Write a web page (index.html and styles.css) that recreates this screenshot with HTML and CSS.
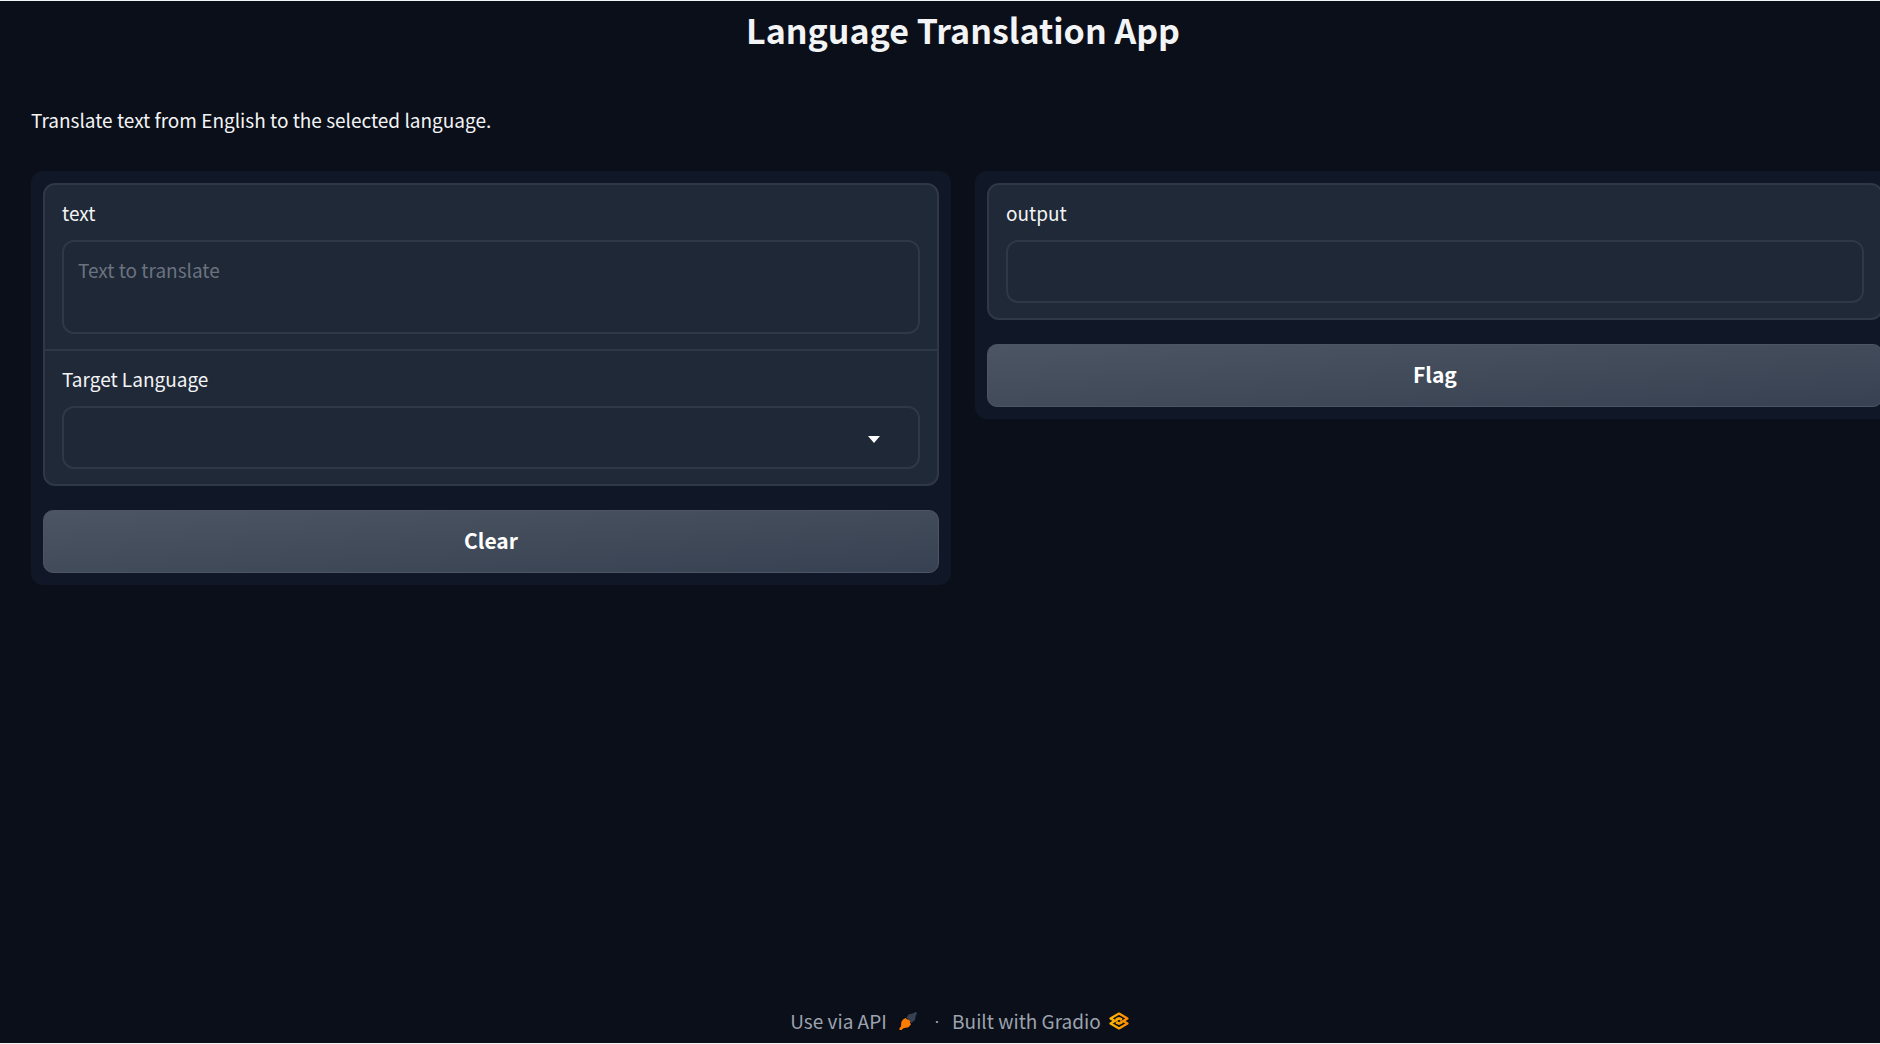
FILE: index.html
```html
<!DOCTYPE html>
<html lang="en">
<head>
<meta charset="utf-8">
<meta name="viewport" content="width=device-width, initial-scale=1">
<title>Language Translation App</title>
<link rel="stylesheet" href="styles.css">
</head>
<body>
<div class="app">
  <main class="content">
    <h1 class="title">Language Translation App</h1>
    <p class="description">Translate text from English to the selected language.</p>
    <div class="columns">
      <section class="panel">
        <div class="form">
          <div class="field">
            <label class="label" for="text">text</label>
            <textarea class="control control-tall" id="text" placeholder="Text to translate"></textarea>
          </div>
          <div class="field">
            <label class="label" for="language">Target Language</label>
            <div class="select-wrap">
              <select class="control" id="language"><option></option></select>
              <svg class="caret" viewBox="0 0 12 7" aria-hidden="true"><path d="M0 0h12L6 7z"/></svg>
            </div>
          </div>
        </div>
        <button class="button" type="button">Clear</button>
      </section>
      <section class="panel">
        <div class="form">
          <div class="field">
            <label class="label" for="output">output</label>
            <input class="control" id="output" type="text" readonly>
          </div>
        </div>
        <button class="button" type="button">Flag</button>
      </section>
    </div>
  </main>
  <footer class="footer">
    <a class="footer-link api" href="#api">Use via API
      <svg class="icon" viewBox="0 0 18 18" aria-hidden="true">
        <path fill="#374151" d="M7.500 5.500L9.500 2.500l4-1L17 0l1 1-1.300 3-.700 4-3.500 3z"/>
        <path fill="#ff7c00" d="M6.500 6l1.800 1.500L10 8l1.300 1.500-.300 1.300 1 1.500-2.500 3-4 .700-1.500.500-1.500 1.500-2 0 0-2L2 14.500 2.300 10 4 7.500z"/>
      </svg>
    </a>
    <span class="dot">·</span>
    <a class="footer-link" href="#gradio">Built with Gradio
      <svg class="icon logo" viewBox="0 0 20 18" aria-hidden="true">
        <defs><linearGradient id="amber" x1="0" y1="0" x2="1" y2="0"><stop offset="0" stop-color="#ffb800"/><stop offset="1" stop-color="#ff8a00"/></linearGradient></defs>
        <g fill="none" stroke="url(#amber)" stroke-width="2.200" stroke-linejoin="round">
          <path d="M5.500 8.800L1.500 6.500 10 1.500l8.500 5L10 11.500 7.500 10M7 7.700q3-2.400 6 0"/>
          <path d="M14.500 9.200l4 2.300L10 16.500l-8.500-5L10 6.500l2.500 1.500M13 10.300q-3 2.400-6 0"/>
        </g>
      </svg>
    </a>
  </footer>
</div>
</body>
</html>
```
FILE: styles.css
```css
* {
  box-sizing: border-box;
}

body {
  margin: 0;
  overflow: hidden;
  background: #0b0f19;
  color: #f3f4f6;
  font-family: "Noto Sans CJK SC", "Open Sans", sans-serif;
  font-size: 19px;
  line-height: 28px;
}

.app {
  display: flex;
  flex-direction: column;
  min-height: 100vh;
  margin-right: -15px;
  padding-left: 31px;
  border-top: 1px solid #f3f4f6;
  border-bottom: 1px solid #f3f4f6;
}

.content {
  flex: 1;
}

.title {
  margin: 5px 0 52px;
  font-size: 34px;
  line-height: 48px;
  text-align: center;
}

.description {
  margin: 0 0 37px;
}

.columns {
  display: grid;
  grid-template-columns: 1fr 1fr;
  align-items: start;
  gap: 24px;
}

.panel {
  display: flex;
  flex-direction: column;
  gap: 24px;
  padding: 12px;
  border-radius: 12px;
  background: #101726;
}

.form {
  border: 2px solid #2e3846;
  border-radius: 12px;
  background: #202937;
}

.field {
  padding: 14px 17px 15px;
}

.field + .field {
  border-top: 2px solid #2e3846;
}

.label {
  display: block;
  margin-bottom: 13px;
}

.control {
  display: block;
  width: 100%;
  height: 63px;
  padding: 14px;
  border: 2px solid #2e3846;
  border-radius: 12px;
  outline: 0;
  appearance: none;
  resize: none;
  background: #1f2836;
  color: inherit;
  font: inherit;
}

.control-tall {
  height: 94px;
}

.control::placeholder {
  color: #6b7280;
}

.select-wrap {
  position: relative;
}

.caret {
  position: absolute;
  top: 30px;
  right: 40px;
  width: 12px;
  height: 7px;
  fill: #fff;
  pointer-events: none;
}

.button {
  height: 63px;
  padding: 0 0 4px;
  border: 1px solid #4b5563;
  border-radius: 10px;
  background: linear-gradient(to bottom right, #4b5563, #374151);
  color: #fff;
  font: inherit;
  font-size: 21px;
  font-weight: 700;
}

.footer {
  display: flex;
  justify-content: center;
  padding: 0 7px 8px 0;
}

.footer-link {
  display: flex;
  align-items: center;
  gap: 8px;
  color: #9ca3af;
  text-decoration: none;
}

.api {
  gap: 12px;
}

.dot {
  margin: 0 12px 0 17px;
  color: #9ca3af;
  font-family: "Liberation Sans", sans-serif;
}

.icon {
  width: 18px;
  height: 18px;
}

.logo {
  width: 20px;
}
```
